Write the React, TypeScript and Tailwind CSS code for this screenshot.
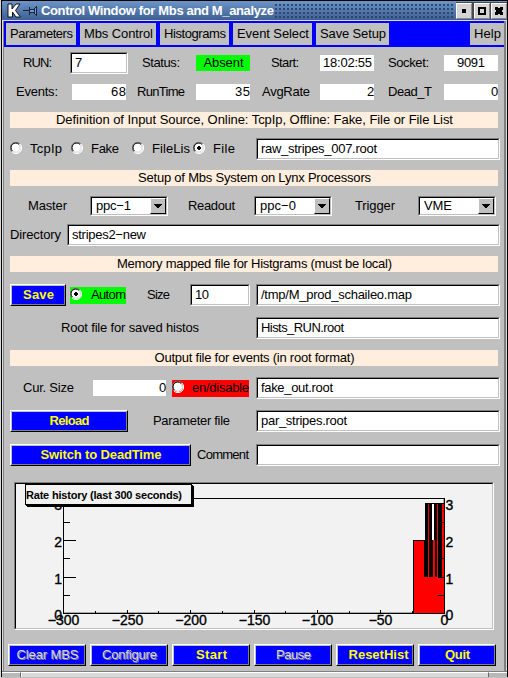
import { useLayoutEffect, useRef, type ReactNode } from "react";

// Spreads the letters of a text so that it fills the width of its box.
function Fit({ children, className = "", size = "text-[13px]" }: { children: string; className?: string; size?: string }) {
  const box = useRef<HTMLSpanElement>(null);
  const ink = useRef<HTMLSpanElement>(null);
  useLayoutEffect(() => {
    if (!box.current || !ink.current) return;
    ink.current.style.letterSpacing = "0px";
    const room = box.current.clientWidth + 1 - ink.current.getBoundingClientRect().width;
    ink.current.style.letterSpacing = `${room / Math.max(1, children.length - 1)}px`;
  }, [children]);
  return (
    <span ref={box} className={`block shrink-0 whitespace-nowrap leading-4 ${size} ${className}`}>
      <span ref={ink} className="inline-block">{children}</span>
    </span>
  );
}

function Row({ className = "", children }: { className?: string; children?: ReactNode }) {
  return <div className={`flex shrink-0 items-center ${className}`}>{children}</div>;
}

function Field({ className = "", children }: { className?: string; children?: ReactNode }) {
  return (
    <div className={`h-[22px] shrink-0 border-t border-l border-r border-b border-t-[#808080] border-l-[#808080] border-r-white border-b-white ${className}`}>
      <div className="flex h-full items-center border border-t-black border-l-black border-r-[#c0c0c0] border-b-[#c0c0c0] bg-white pl-[3px]">
        {children}
      </div>
    </div>
  );
}

function Value({ className = "", children }: { className?: string; children: ReactNode }) {
  return <div className={`flex h-4 shrink-0 items-center justify-end bg-white ${className}`}>{children}</div>;
}

function Banner({ className = "", children }: { className?: string; children: ReactNode }) {
  return <div className={`ml-[6px] flex h-4 w-[488px] shrink-0 items-center justify-center bg-[#ffeedd] ${className}`}>{children}</div>;
}

function Button({ className = "", children }: { className?: string; children: ReactNode }) {
  return (
    <button className={`block h-[22px] shrink-0 border border-t-white border-l-white border-r-black border-b-black ${className}`}>
      <span className="flex h-full items-center justify-center border border-t-[#c0c0c0] border-l-[#c0c0c0] border-r-[#808080] border-b-[#808080] bg-[#0000ff] font-bold text-[#ffff00]">
        {children}
      </span>
    </button>
  );
}

function Radio({ on = false, className = "" }: { on?: boolean; className?: string }) {
  return (
    <svg width="12" height="12" viewBox="0 0 12 12" className={`relative -top-px shrink-0 ${className}`}>
      <circle cx="6" cy="6" r="5" fill="#fff" />
      <path d="M1.800 9.800A5.400 5.400 0 0 1 9.800 1.800" fill="none" stroke="#808080" />
      <path d="M2.400 9A4.600 4.600 0 0 1 9 2.400" fill="none" stroke="#000" />
      <path d="M10 2A5.500 5.500 0 0 1 2 10" fill="none" stroke="#fff" />
      <path d="M9.400 3.200A4.500 4.500 0 0 1 3.200 9.400" fill="none" stroke="#d0d0d0" strokeWidth=".8" />
      {on && <path d="M5 4h2v1h1v2H7v1H5V7H4V5h1z" fill="#000" />}
    </svg>
  );
}

function Combo({ className = "", children }: { className?: string; children: ReactNode }) {
  return (
    <div className={`h-5 w-[78px] shrink-0 border border-t-[#808080] border-l-[#808080] border-r-white border-b-white ${className}`}>
      <div className="flex h-full items-center justify-between border border-t-black border-l-black border-r-[#c0c0c0] border-b-[#c0c0c0] bg-white pl-[4px]">
        {children}
        <span className="flex h-4 w-4 shrink-0 items-center justify-center border border-t-white border-l-white border-r-black border-b-black bg-[#c0c0c0]">
          <svg width="8" height="4" viewBox="0 0 8 4" shapeRendering="crispEdges">
            <path d="M0 0h8v1H7v1H6v1H5v1H3V3H2V2H1V1H0z" fill="#000" />
          </svg>
        </span>
      </div>
    </div>
  );
}

function MenuItem({ className = "", children }: { className?: string; children: ReactNode }) {
  return <div className={`flex h-[22px] shrink-0 items-center bg-[#c0c0c0] pl-1 ${className}`}>{children}</div>;
}

function TitleBar() {
  return (
    <div className="flex h-[19px] shrink-0 items-center bg-gradient-to-b from-[#6c95c8] to-[#3f5f92]">
      <svg width="14" height="16" viewBox="0 0 14 16" className="ml-[5px] shrink-0">
        <path d="M1 1h4v5l4-5h4L8.500 7.500 13.500 14H9L5.500 9v5H1z" fill="#fff" stroke="#111" strokeWidth="1" />
      </svg>
      <svg width="15" height="10" viewBox="0 0 15 10" className="ml-[2px] shrink-0" shapeRendering="crispEdges">
        <path d="M7 3h4v4H7zM12 2h2v6h-2z" fill="#7897c4" />
        <path d="M0 4.500h6M6.500 1v8M7 3.500h4M7 6.500h4M11.500 2v6M12 1.500h1M12 8.500h1M13.500 0v10" stroke="#16263f" fill="none" />
      </svg>
      <Fit className="ml-[3px] w-[232px] font-bold text-white">Control Window for Mbs and M_analyze</Fit>
      <div className="ml-[2px] mt-[1px] h-[15px] w-[178px] bg-[radial-gradient(circle_at_1px_1px,#29476f_0.700px,transparent_1px)] bg-[size:4px_4px]" />
      <div className="ml-[3px] flex h-[17px] w-[51px] shrink-0 items-center justify-between bg-[#4a4a4a]">
        {[0, 1, 2].map((n) => (
          <span key={n} className="flex h-4 w-[16px] items-center justify-center border border-t-white border-l-white border-r-[#888] border-b-[#888] bg-[#d4d4d4]">
            <svg width="10" height="10" viewBox="0 0 10 10" shapeRendering="crispEdges">
              {n === 0 && <path d="M3 3h4v4H3z" />}
              {n === 1 && <path d="M2 2h6v6H2z" fill="none" stroke="#000" strokeWidth="2" />}
              {n === 2 && <path d="M1 1h3v1h2V1h3v3H8v2h1v3H6V8H4v1H1V6h1V4H1z" />}
            </svg>
          </span>
        ))}
      </div>
    </div>
  );
}

function RateHistory() {
  const label = "fill-black stroke-black text-[14px] [stroke-width:0.35px]";
  return (
    <div className="ml-[10px] mt-[16px] h-[148px] w-[480px] shrink-0 border border-t-[#808080] border-l-[#808080] border-r-white border-b-white">
      <div className="relative h-full border border-t-black border-l-black border-r-[#c0c0c0] border-b-[#c0c0c0] bg-[#f2f2f2]">
        <svg width="476" height="144" viewBox="16 484 476 144" className="block">
          <g shapeRendering="crispEdges">
            <path d="M64 612.500H444M443.500 499V613" stroke="#a8a8a8" />
            <path d="M413 540h31v73h-31z" fill="#f00" />
            <path d="M424 540h20v37h-20zM425 503h19v37h-19z" fill="#000" />
            <path d="M428 503h1v74h-1zM437 503h1v74h-1zM442 503h2v74h-2zM433 540h2v37h-2z" fill="#f00" />
            <path d="M432 504h2v36h-2z" fill="#fff" />
            <path d="M63.500 498.500H444.500V613.500H63.500zM413.500 613V540.500H425M425 503.500h19" stroke="#000" fill="none" />
            <path d="M64 503.500h12M64 540.500h12M64 577.500h12M64 522.500h6M64 558.500h6M64 595.500h6M438 595.500h6M438 558.500h6M438 522.500h6M438 577.500h6" stroke="#000" />
            <path d="M127.500 610v3M190.500 610v3M254.500 610v3M317.500 610v3M380.500 610v3M95.500 611v2M158.500 611v2M222.500 611v2M285.500 611v2M349.500 611v2M412.500 611v2" stroke="#000" />
          </g>
          <g className={label} textAnchor="end">
            <text x="62" y="510">3</text><text x="62" y="547">2</text>
            <text x="62" y="584">1</text><text x="62" y="620">0</text>
          </g>
          <g className={label}>
            <text x="445.500" y="510">3</text><text x="445.500" y="547">2</text>
            <text x="445.500" y="584">1</text><text x="445.500" y="620">0</text>
          </g>
          <g className={label} textAnchor="middle">
            <text x="63.500" y="625">−300</text><text x="127.500" y="625">−250</text>
            <text x="191" y="625">−200</text><text x="254.500" y="625">−150</text>
            <text x="317.500" y="625">−100</text><text x="380.500" y="625">−50</text>
            <text x="444.500" y="625">0</text>
          </g>
        </svg>
        <div className="absolute left-[9px] top-0 flex h-[21px] w-[167px] items-center border border-black bg-[#f2f2f2] shadow-[1px_1px_0_#000,2px_2px_0_#000]">
          <Fit size="text-[11px]" className="w-[155px] font-bold">Rate history (last 300 seconds)</Fit>
        </div>
      </div>
    </div>
  );
}

const disabled = "font-normal text-[#d8d8e8] [text-shadow:1px_1px_0_#808080]";

export default function App() {
  return (
    <div className="flex h-[678px] w-[508px] flex-col overflow-hidden border-l border-l-[#d8d8d8] bg-[#c0c0c0] font-['Liberation_Sans',Arial,sans-serif] text-black">
      <div className="flex h-[677px] flex-col border border-black">
        <TitleBar />
        <div className="h-[1px] shrink-0 bg-[#dcdcdc]" />
        <div className="flex h-[650px] shrink-0 border-x border-l-[#e0e0e0] border-r-[#d8d8d8]">
          <div className="flex w-[503px] shrink-0 flex-col border-l border-r-2 border-l-[#808080] border-r-[#808080]">
            <div className="flex h-[26px] shrink-0 items-center gap-1 bg-[#0000ff] pl-[2px]">
              <MenuItem className="w-[70px]"><Fit className="w-[62px]">Parameters</Fit></MenuItem>
              <MenuItem className="w-[76px]"><Fit className="w-[68px]">Mbs Control</Fit></MenuItem>
              <MenuItem className="w-[69px]"><Fit className="w-[61px]">Histograms</Fit></MenuItem>
              <MenuItem className="w-[79px]"><Fit className="w-[71px]">Event Select</Fit></MenuItem>
              <MenuItem className="w-[73px]"><Fit className="w-[65px]">Save Setup</Fit></MenuItem>
              <MenuItem className="ml-auto w-[34px]"><Fit className="w-[26px]">Help</Fit></MenuItem>
            </div>

            <Row className="mt-[5px] h-[22px]">
              <Fit className="ml-[19px] w-[28px]">RUN:</Fit>
              <Field className="ml-[19px] w-[58px]"><Fit className="w-[7px]">7</Fit></Field>
              <Fit className="ml-[14px] w-[37px]">Status:</Fit>
              <div className="ml-[17px] flex h-4 w-[54px] items-center justify-center bg-[#00ff00]"><Fit className="w-[39px]">Absent</Fit></div>
              <Fit className="ml-[21px] w-[27px]">Start:</Fit>
              <Value className="ml-[22px] w-[54px] pr-[3px]"><Fit className="w-[48px]">18:02:55</Fit></Value>
              <Fit className="ml-[14px] w-[40px]">Socket:</Fit>
              <Value className="ml-[16px] w-[54px] pr-[14px]"><Fit className="w-[27px]">9091</Fit></Value>
            </Row>

            <Row className="mt-[10px] h-4">
              <Fit className="ml-[12px] w-[41px]">Events:</Fit>
              <Value className="ml-[15px] w-[54px]"><Fit className="w-[14px] -translate-x-px">68</Fit></Value>
              <Fit className="ml-[11px] w-[47px]">RunTime</Fit>
              <Value className="ml-[12px] w-[54px]"><Fit className="w-[14px] -translate-x-px">35</Fit></Value>
              <Fit className="ml-[12px] w-[47px]">AvgRate</Fit>
              <Value className="ml-[11px] w-[54px]"><Fit className="w-[7px]">2</Fit></Value>
              <Fit className="ml-[14px] w-[43px]">Dead_T</Fit>
              <Value className="ml-[13px] w-[54px]"><Fit className="w-[7px]">0</Fit></Value>
            </Row>

            <Banner className="mt-[12px]"><Fit className="w-[396px]">Definition of Input Source, Online: TcpIp, Offline: Fake, File or File List</Fit></Banner>

            <Row className="mt-[10px] h-[22px]">
              <Radio className="ml-[6px]" /><Fit className="ml-[8px] w-[31px]">TcpIp</Fit>
              <Radio className="ml-[10px]" /><Fit className="ml-[8px] w-[27px]">Fake</Fit>
              <Radio className="ml-[14px]" /><Fit className="ml-[8px] w-[37px]">FileLis</Fit>
              <Radio on className="ml-[4px]" /><Fit className="ml-[8px] w-[21px]">File</Fit>
              <Field className="ml-[22px] w-[244px]"><Fit className="w-[115px]">raw_stripes_007.root</Fit></Field>
            </Row>

            <Banner className="mt-[10px]"><Fit className="w-[232px]">Setup of Mbs System on Lynx Processors</Fit></Banner>

            <Row className="mt-[10px] h-5">
              <Fit className="ml-[24px] w-[38px]">Master</Fit>
              <Combo className="ml-[24px]"><Fit className="w-[34px]">ppc−1</Fit></Combo>
              <Fit className="ml-[20px] w-[46px]">Readout</Fit>
              <Combo className="ml-[20px]"><Fit className="w-[35px]">ppc−0</Fit></Combo>
              <Fit className="ml-[23px] w-[39px]">Trigger</Fit>
              <Combo className="ml-[24px]"><Fit className="w-[27px]">VME</Fit></Combo>
            </Row>

            <Row className="mt-[8px] h-[22px]">
              <Fit className="ml-[6px] w-[50px]">Directory</Fit>
              <Field className="ml-[7px] w-[433px]"><Fit className="w-[73px]">stripes2−new</Fit></Field>
            </Row>

            <Banner className="mt-[10px]"><Fit className="w-[274px]">Memory mapped file for Histgrams (must be local)</Fit></Banner>

            <Row className="mt-[12px] h-[22px]">
              <Button className="ml-[6px] w-[56px]"><Fit className="w-[30px]">Save</Fit></Button>
              <div className="ml-[4px] flex h-[17px] w-[56px] shrink-0 items-center bg-[#00ff00]">
                <Radio on /><Fit className="ml-[9px] w-[34px]">Autom</Fit>
              </div>
              <Fit className="ml-[21px] w-[22px]">Size</Fit>
              <Field className="ml-[21px] w-[60px]"><Fit className="w-[13px]">10</Fit></Field>
              <Field className="ml-[6px] w-[244px]"><Fit className="w-[150px]">/tmp/M_prod_schaileo.map</Fit></Field>
            </Row>

            <Row className="mt-[11px] h-[22px]">
              <Fit className="ml-[57px] w-[137px]">Root file for saved histos</Fit>
              <Field className="ml-[58px] w-[244px]"><Fit className="w-[82px]">Hists_RUN.root</Fit></Field>
            </Row>

            <Banner className="mt-[11px]"><Fit className="w-[199px]">Output file for events (in root format)</Fit></Banner>

            <Row className="mt-[11px] h-[22px]">
              <Fit className="ml-[19px] w-[50px]">Cur. Size</Fit>
              <Value className="ml-[20px] w-[73px]"><Fit className="w-[7px]">0</Fit></Value>
              <div className="ml-[6px] flex h-[17px] w-[77px] shrink-0 items-center bg-[#ff0000]">
                <Radio /><Fit className="ml-[8px] w-[56px]">en/disable</Fit>
              </div>
              <Field className="ml-[7px] w-[244px]"><Fit className="w-[71px]">fake_out.root</Fit></Field>
            </Row>

            <Row className="mt-[11px] h-[22px]">
              <Button className="ml-[6px] w-[118px]"><Fit className="w-[39px]">Reload</Fit></Button>
              <Fit className="ml-[25px] w-[76px]">Parameter file</Fit>
              <Field className="ml-[27px] w-[244px]"><Fit className="w-[85px]">par_stripes.root</Fit></Field>
            </Row>

            <Row className="mt-[12px] h-[22px]">
              <Button className="ml-[6px] w-[181px]"><Fit className="w-[120px]">Switch to DeadTime</Fit></Button>
              <Fit className="ml-[6px] w-[51px]">Comment</Fit>
              <Field className="ml-[8px] w-[244px]" />
            </Row>

            <RateHistory />

            <Row className="mt-[14px] h-[22px] gap-1 pl-1">
              <Button className="w-[78px]"><Fit className={`w-[61px] ${disabled}`}>Clear MBS</Fit></Button>
              <Button className="w-[78px]"><Fit className={`w-[54px] ${disabled}`}>Configure</Fit></Button>
              <Button className="w-[78px]"><Fit className="w-[30px]">Start</Fit></Button>
              <Button className="w-[78px]"><Fit className={`w-[34px] ${disabled}`}>Pause</Fit></Button>
              <Button className="w-[78px]"><Fit className="ml-[6px] w-[59px]">ResetHist</Fit></Button>
              <Button className="w-[78px]"><Fit className="w-[24px]">Quit</Fit></Button>
            </Row>
          </div>
        </div>
        <div className="flex h-[6px] shrink-0 border-t border-[#808080] bg-[#d8d8d8]">
          <div className="w-[19px] border-t border-r border-t-white border-r-[#666] bg-[#b8b8b8]" />
          <div className="flex-1 border-t border-l border-white" />
          <div className="w-[19px] border-t border-l border-t-white border-l-[#666] bg-[#b8b8b8]" />
        </div>
      </div>
    </div>
  );
}
